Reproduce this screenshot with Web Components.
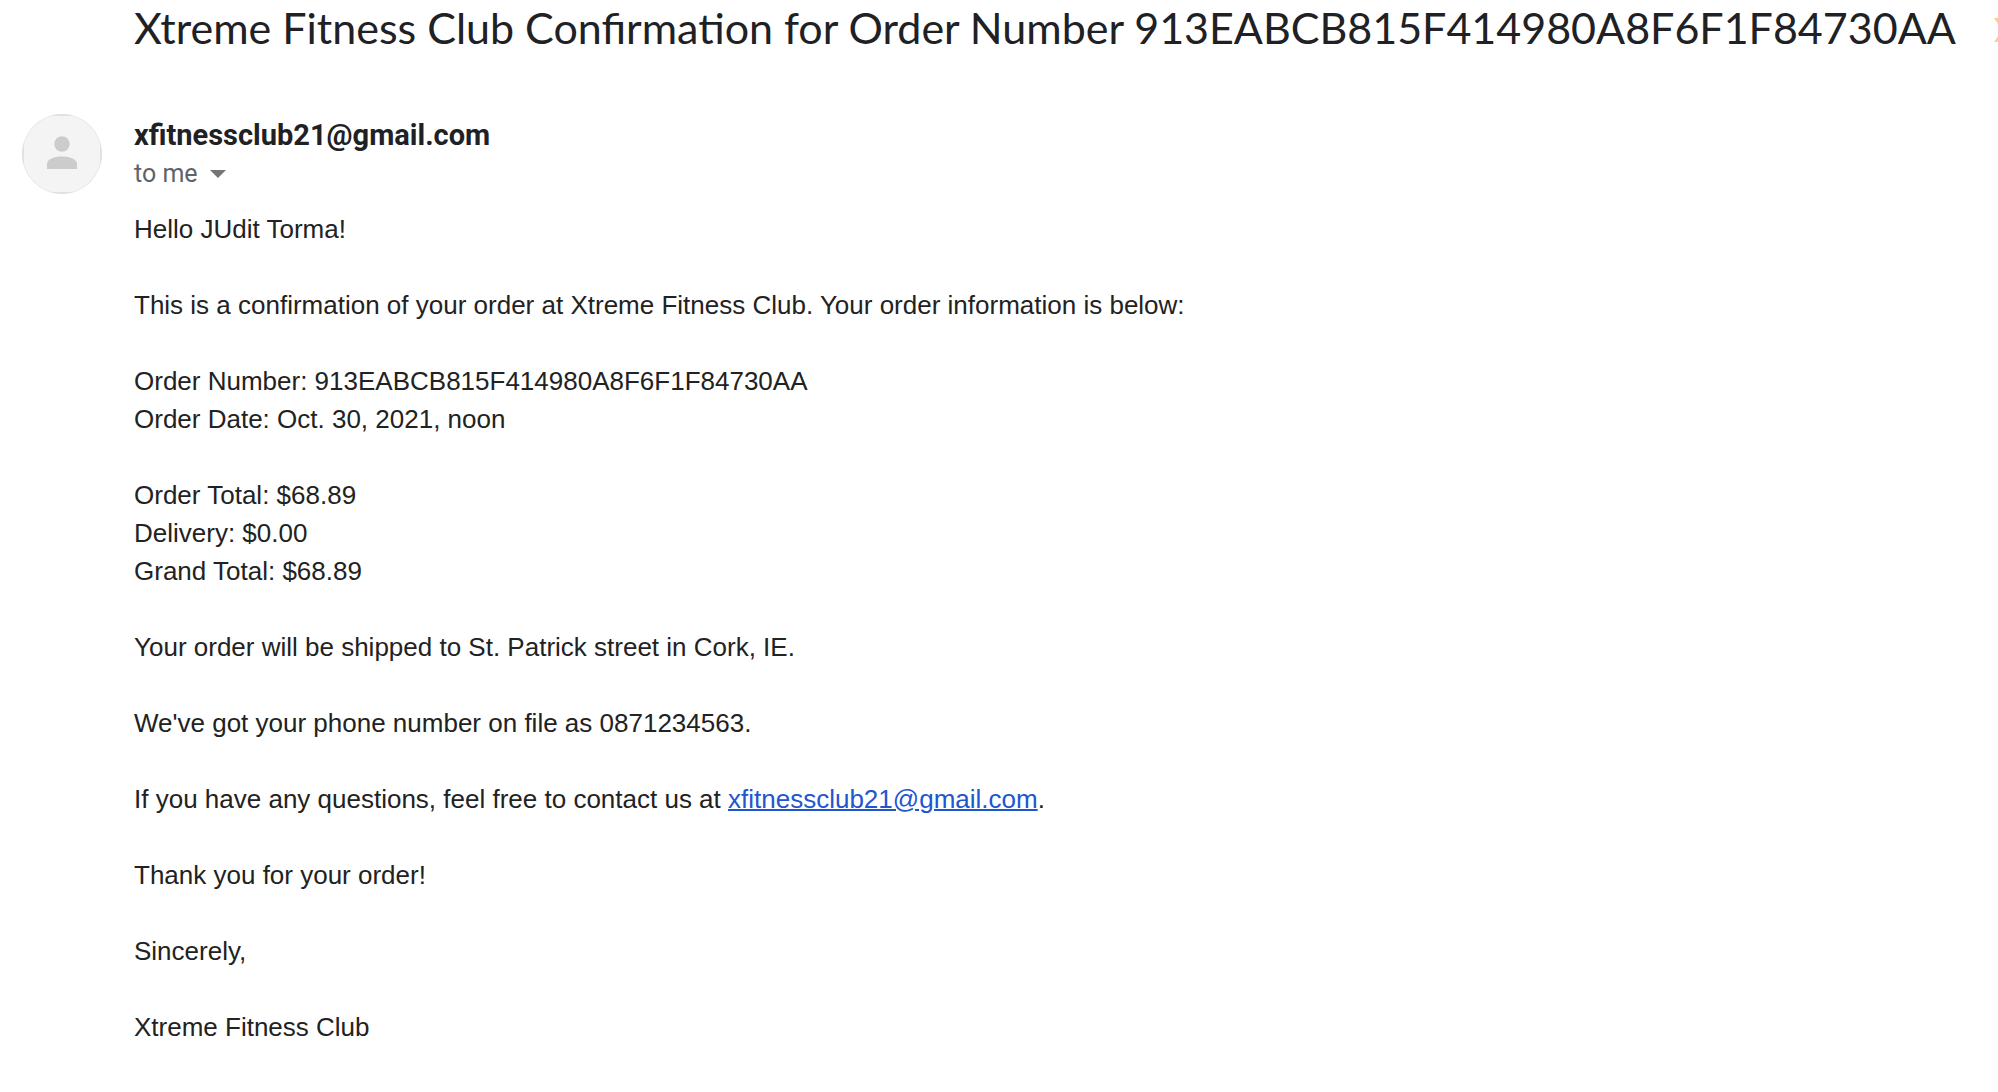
<!DOCTYPE html>
<html lang="en">
<head>
<meta charset="utf-8">
<title>Xtreme Fitness Club Confirmation</title>
<style>
  body { margin: 0; background: #fff; color: #222; font-family: "Liberation Sans", Arial, sans-serif; overflow-x: hidden; }
  mail-body a { color: #2056cf; text-decoration-thickness: 2px; }
</style>
</head>
<body>
<mail-message>
  <mail-subject slot="subject">Xtreme Fitness Club Confirmation for Order Number 913EABCB815F414980A8F6F1F84730AA</mail-subject>
  <mail-avatar slot="avatar"></mail-avatar>
  <mail-sender slot="sender">xfitnessclub21@gmail.com</mail-sender>
  <mail-body>
    <p>Hello JUdit Torma!</p>
    <p>This is a confirmation of your order at Xtreme Fitness Club. Your order information is below:</p>
    <p>Order Number: 913EABCB815F414980A8F6F1F84730AA<br>Order Date: Oct. 30, 2021, noon</p>
    <p>Order Total: $68.89<br>Delivery: $0.00<br>Grand Total: $68.89</p>
    <p>Your order will be shipped to St. Patrick street in Cork, IE.</p>
    <p>We've got your phone number on file as 0871234563.</p>
    <p>If you have any questions, feel free to contact us at <a href="mailto:xfitnessclub21@gmail.com">xfitnessclub21@gmail.com</a>.</p>
    <p>Thank you for your order!</p>
    <p>Sincerely,</p>
    <p>Xtreme Fitness Club</p>
  </mail-body>
</mail-message>
<script>
  const define = (name, html) => customElements.define(name, class extends HTMLElement {
    constructor() {
      super();
      this.attachShadow({ mode: "open" }).innerHTML = html;
    }
  });

  define("mail-message", `
    <style>
      :host { display: grid; grid-template-columns: 80px minmax(0, 1fr); column-gap: 32px; padding-left: 22px; }
      .subject, .content { grid-column: 2; }
      .avatar { grid-column: 1; }
      .avatar, .sender { padding-top: 56px; }
    </style>
    <div class="subject"><slot name="subject"></slot></div>
    <div class="avatar"><slot name="avatar"></slot></div>
    <div class="sender"><slot name="sender"></slot></div>
    <div class="content"><slot></slot></div>`);

  define("mail-subject", `
    <style>
      :host { display: flex; align-items: flex-start; overflow: hidden; padding-bottom: 2px; }
      h1 { flex: 1; min-width: 0; margin: 0; font: 400 43px/56px Lato, sans-serif; color: #202124; white-space: nowrap; }
      button { flex: none; margin: 0 -28px 0 0; padding: 18px 0 0; border: 0; background: none; line-height: 0; }
    </style>
    <h1><slot></slot></h1>
    <button type="button" aria-label="Important">
      <svg width="32" height="24" viewBox="0 0 32 24"><path d="M0 0H22L32 12L22 24H0L8 12Z" fill="#f7d57e"/></svg>
    </button>`);

  define("mail-avatar", `
    <style>
      :host { display: block; }
      svg { display: block; }
    </style>
    <svg width="80" height="80" viewBox="0 0 80 80" role="img" aria-label="Sender">
      <defs><clipPath id="disc"><circle cx="40" cy="40" r="40"/></clipPath></defs>
      <g clip-path="url(#disc)">
        <rect width="80" height="80" fill="#e1e1e1"/>
        <rect x="2" y="2" width="76" height="76" rx="36" fill="#f4f4f4"/>
        <circle cx="40" cy="40" r="39.4" fill="#f4f4f4"/>
        <path d="M28 0H52V2H28ZM28 78H52V80H28ZM0 28H2V52H0ZM78 28H80V52H78Z" fill="#e1e1e1"/>
        <circle cx="40" cy="30" r="7.7" fill="#ccc"/>
        <path d="M25 55V50C25 45 32 42.5 40 42.5S55 45 55 50V55Z" fill="#ccc"/>
      </g>
    </svg>`);

  define("mail-sender", `
    <style>
      :host { display: flex; flex-direction: column; align-items: flex-start; font-family: Roboto, sans-serif; }
      .name { font-size: 29px; line-height: 42px; font-weight: 700; color: #202124; }
      button { display: flex; align-items: center; gap: 12px; margin: 0; padding: 0; border: 0; background: none;
        font: 400 25px/36px Roboto, sans-serif; color: #5f6368; }
    </style>
    <div class="name"><slot></slot></div>
    <button type="button">to me
      <svg width="16" height="8" viewBox="0 0 16 8"><path d="M0 0H16L8 8Z" fill="#757575"/></svg>
    </button>`);

  define("mail-body", `
    <style>
      :host { display: flex; flex-direction: column; gap: 38px; padding: 16px 0 32px; font-size: 26px; line-height: 38px; }
      ::slotted(p) { margin: 0; }
    </style>
    <slot></slot>`);
</script>
</body>
</html>
